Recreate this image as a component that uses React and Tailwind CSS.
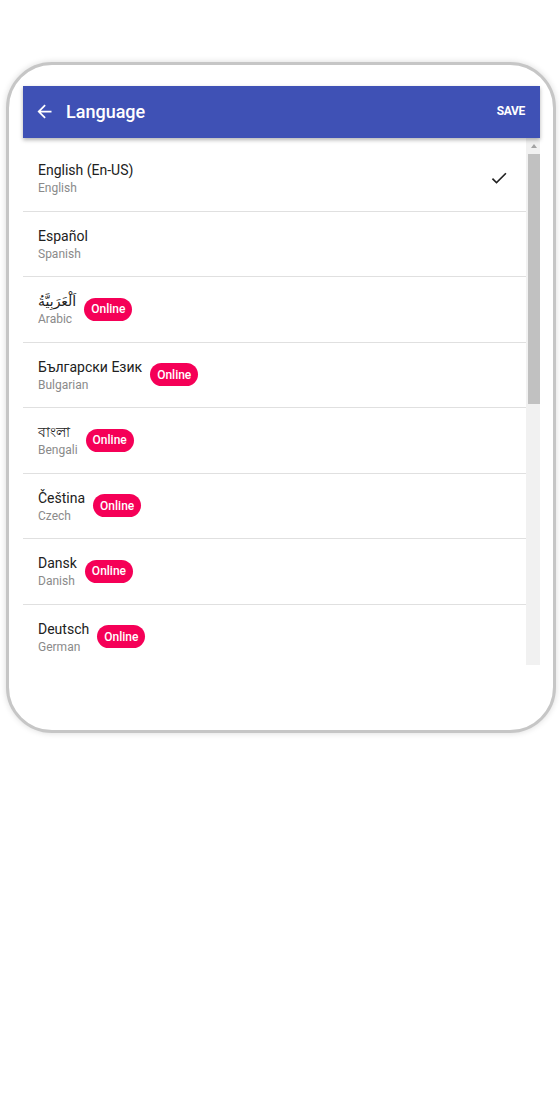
import React from 'react';

// Language picker inside a phone frame
const languages = [
  { name: 'English (En-US)', sub: 'English', selected: true },
  { name: 'Español', sub: 'Spanish' },
  { name: 'اَلْعَرَبِيَّةُ', sub: 'Arabic', online: true },
  { name: 'Български Език', sub: 'Bulgarian', online: true },
  { name: 'বাংলা', sub: 'Bengali', online: true },
  { name: 'Čeština', sub: 'Czech', online: true },
  { name: 'Dansk', sub: 'Danish', online: true },
  { name: 'Deutsch', sub: 'German', online: true },
];

const ArrowBack = () => (
  <svg width="21" height="21" viewBox="0 0 24 24" fill="white">
    <path d="M20 11H7.83l5.59-5.59L12 4l-8 8 8 8 1.41-1.41L7.83 13H20v-2z" />
  </svg>
);

const Check = () => (
  <svg width="20" height="20" viewBox="0 0 24 24" fill="#212121">
    <path d="M9 16.17L4.83 12l-1.42 1.41L9 19 21 7l-1.41-1.41z" />
  </svg>
);

const LanguageRow = ({ lang }) => (
  <div className="flex items-center justify-between px-[15px] pt-[14px] pb-[14.5px] border-b border-[#e0e0e0]">
    <div className="flex items-center">
      <div className="flex flex-col">
        <span className="text-[14px] leading-[20px] text-[#212121]">{lang.name}</span>
        <span className="text-[12px] leading-[16px] text-[#8a8a8a]">{lang.sub}</span>
      </div>
      {lang.online && (
        <span className="ml-2 h-[23px] px-[7px] rounded-full bg-[#f50057] text-white text-[12px] font-medium flex items-center">
          Online
        </span>
      )}
    </div>
    {lang.selected && (
      <div className="mr-[2px]">
        <Check />
      </div>
    )}
  </div>
);

export default function App() {
  return (
    <div className="min-h-[1120px] bg-white font-['Roboto','DejaVu_Sans',sans-serif]">
      <div className="pt-[62px] pl-[6px]">
        <div className="w-[550px] h-[671px] rounded-[46px] border-[3px] border-[#c6c6c6] bg-white shadow-[0_0_6px_rgba(0,0,0,0.15)] pt-[21px] pl-[14px] pr-[13px] flex flex-col">
          {/* Toolbar */}
          <div className="relative z-10 h-[52px] bg-[#3f51b5] flex items-center justify-between pl-[11px] pr-[15px] pb-[2px] shadow-[0_2px_4px_rgba(0,0,0,0.3)]">
            <div className="flex items-center">
              <ArrowBack />
              <span className="ml-[11px] text-white text-[18px] font-medium">Language</span>
            </div>
            <span className="text-white text-[12px] font-bold tracking-tight">SAVE</span>
          </div>

          {/* List + scrollbar */}
          <div className="h-[527px] flex">
            <div className="flex-1 overflow-hidden pt-[8px]">
              {languages.map((lang) => (
                <LanguageRow key={lang.sub} lang={lang} />
              ))}
            </div>
            <div className="w-[14px] bg-[#f1f1f1] flex flex-col">
              <div className="h-[16px] flex items-center justify-center pl-[2px]">
                <div className="w-0 h-0 border-l-[3px] border-r-[3px] border-b-[4px] border-l-transparent border-r-transparent border-b-[#a3a3a3]" />
              </div>
              <div className="ml-[2px] h-[250px] bg-[#c1c1c1]" />
            </div>
          </div>
        </div>
      </div>
    </div>
  );
}
